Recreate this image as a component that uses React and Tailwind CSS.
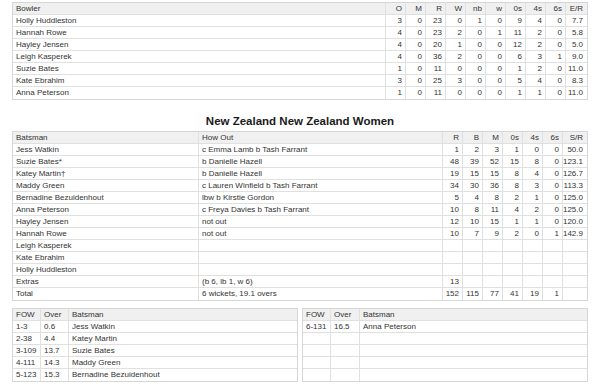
import React from 'react';

const bowlers = [
  ['Holly Huddleston', '3', '0', '23', '0', '1', '0', '9', '4', '0', '7.7'],
  ['Hannah Rowe', '4', '0', '23', '2', '0', '1', '11', '2', '0', '5.8'],
  ['Hayley Jensen', '4', '0', '20', '1', '0', '0', '12', '2', '0', '5.0'],
  ['Leigh Kasperek', '4', '0', '36', '2', '0', '0', '6', '3', '1', '9.0'],
  ['Suzie Bates', '1', '0', '11', '0', '0', '0', '1', '2', '0', '11.0'],
  ['Kate Ebrahim', '3', '0', '25', '3', '0', '0', '5', '4', '0', '8.3'],
  ['Anna Peterson', '1', '0', '11', '0', '0', '0', '1', '1', '0', '11.0'],
];

const batsmen = [
  ['Jess Watkin', 'c Emma Lamb b Tash Farrant', '1', '2', '3', '1', '0', '0', '50.0'],
  ['Suzie Bates*', 'b Danielle Hazell', '48', '39', '52', '15', '8', '0', '123.1'],
  ['Katey Martin†', 'b Danielle Hazell', '19', '15', '15', '8', '4', '0', '126.7'],
  ['Maddy Green', 'c Lauren Winfield b Tash Farrant', '34', '30', '36', '8', '3', '0', '113.3'],
  ['Bernadine Bezuidenhout', 'lbw b Kirstie Gordon', '5', '4', '8', '2', '1', '0', '125.0'],
  ['Anna Peterson', 'c Freya Davies b Tash Farrant', '10', '8', '11', '4', '2', '0', '125.0'],
  ['Hayley Jensen', 'not out', '12', '10', '15', '1', '1', '0', '120.0'],
  ['Hannah Rowe', 'not out', '10', '7', '9', '2', '0', '1', '142.9'],
  ['Leigh Kasperek', '', '', '', '', '', '', '', ''],
  ['Kate Ebrahim', '', '', '', '', '', '', '', ''],
  ['Holly Huddleston', '', '', '', '', '', '', '', ''],
  ['Extras', '(b 6, lb 1, w 6)', '13', '', '', '', '', '', ''],
  ['Total', '6 wickets, 19.1 overs', '152', '115', '77', '41', '19', '1', ''],
];

const fowLeft = [
  ['1-3', '0.6', 'Jess Watkin'],
  ['2-38', '4.4', 'Katey Martin'],
  ['3-109', '13.7', 'Suzie Bates'],
  ['4-111', '14.3', 'Maddy Green'],
  ['5-123', '15.3', 'Bernadine Bezuidenhout'],
];

const fowRight = [
  ['6-131', '16.5', 'Anna Peterson'],
  ['', '', ''],
  ['', '', ''],
  ['', '', ''],
  ['', '', ''],
];

// textCols = how many leading columns are left aligned
const Grid = ({ cols, header, rows, textCols }) => {
  const renderRow = (cells, isHead, i) => (
    <div
      key={i}
      className={`grid h-[12px] ${cols} ${isHead ? 'bg-[#f0f0f0]' : 'bg-white'} ${i !== rows.length ? 'border-b border-[#e0e0e0]' : ''}`}
    >
      {cells.map((c, j) => (
        <div
          key={j}
          className={`flex items-center overflow-hidden whitespace-nowrap leading-none ${j < cells.length - 1 ? 'border-r border-[#e0e0e0]' : ''} ${j < textCols ? 'pl-[3px]' : 'justify-end pr-[3px]'}`}
        >
          {c}
        </div>
      ))}
    </div>
  );

  return (
    <div className="border border-[#d6d6d6]">
      {renderRow(header, true, -1)}
      {rows.map((r, i) => renderRow(r, false, i + 1))}
    </div>
  );
};

export default function App() {
  return (
    <div className="w-[600px] h-[384px] bg-white pt-[2px] px-[12px] text-[8px] text-[#333] font-['Liberation_Sans',Arial,sans-serif] overflow-hidden">
      <Grid
        cols="grid-cols-[373px_repeat(9,20px)_20px]"
        header={['Bowler', 'O', 'M', 'R', 'W', 'nb', 'w', '0s', '4s', '6s', 'E/R']}
        rows={bowlers}
        textCols={1}
      />

      <div className="mt-[14px] mb-[3px] h-[14px] leading-[14px] text-center text-[11.5px] font-bold text-[#1a1a1a]">
        New Zealand New Zealand Women
      </div>

      <Grid
        cols="grid-cols-[186px_244px_repeat(6,20px)_23px]"
        header={['Batsman', 'How Out', 'R', 'B', 'M', '0s', '4s', '6s', 'S/R']}
        rows={batsmen}
        textCols={2}
      />

      <div className="mt-[7px] flex gap-[4px]">
        <div className="flex-1">
          <Grid
            cols="grid-cols-[28px_28px_1fr]"
            header={['FOW', 'Over', 'Batsman']}
            rows={fowLeft}
            textCols={3}
          />
        </div>
        <div className="flex-1">
          <Grid
            cols="grid-cols-[28px_29px_1fr]"
            header={['FOW', 'Over', 'Batsman']}
            rows={fowRight}
            textCols={3}
          />
        </div>
      </div>
    </div>
  );
}
